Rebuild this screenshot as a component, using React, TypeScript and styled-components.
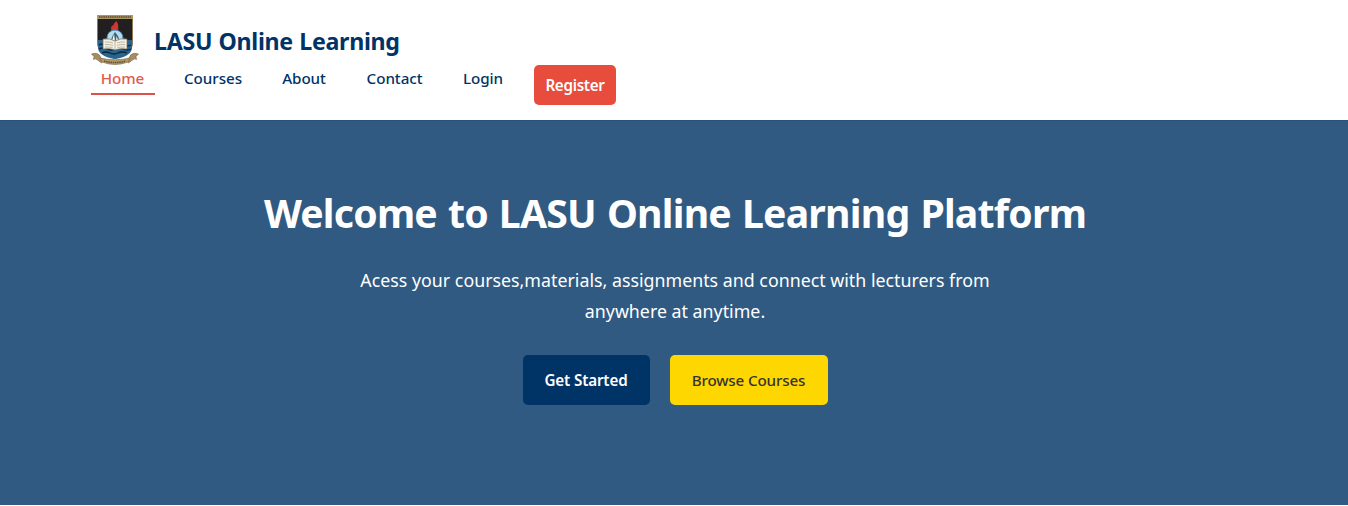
import React from "react";
import styled, { createGlobalStyle } from "styled-components";

const GlobalStyle = createGlobalStyle`
  * { box-sizing: border-box; margin: 0; padding: 0; }
  body {
    font-family: "Segoe UI", "Noto Sans", "Open Sans", sans-serif;
    background: #fff;
    color: #333;
    overflow: hidden;
  }
`;

const Header = styled.header`
  height: 120px;
  padding: 15px 0 0 91px;
  background: #fff;
`;

const Brand = styled.div`
  display: flex;
  align-items: center;
  gap: 15px;
  height: 50px;
`;

const BrandName = styled.span`
  margin-top: 1px;
  font-size: 23.2px;
  line-height: 36px;
  font-weight: 700;
  letter-spacing: -0.29px;
  word-spacing: 0.6px;
  color: #003366;
  white-space: nowrap;
`;

const Nav = styled.nav`
  display: flex;
  align-items: flex-start;
  gap: 20px;
`;

const NavLink = styled.a<{ $width: number; $active?: boolean }>`
  width: ${(p) => p.$width}px;
  height: 30px;
  padding-right: 1px;
  border-bottom: 2px solid ${(p) => (p.$active ? "#d9534a" : "transparent")};
  font-size: 15.2px;
  line-height: 27px;
  font-weight: 500;
  letter-spacing: -0.05px;
  text-align: center;
  white-space: nowrap;
  text-decoration: none;
  color: ${(p) => (p.$active ? "#e05a4e" : "#003366")};
`;

const RegisterLink = styled.a`
  width: 82px;
  height: 40px;
  border-radius: 5px;
  background: #e74c3c;
  color: #fff;
  font-size: 15.2px;
  line-height: 41px;
  font-weight: 600;
  letter-spacing: -0.3px;
  text-align: center;
  text-decoration: none;
`;

const Hero = styled.section`
  display: flex;
  flex-direction: column;
  align-items: center;
  height: 385px;
  padding-top: 62px;
  padding-left: 2px;
  background: #305a82;
  box-shadow: inset 0 1px 0 #2a517a;
  color: #fff;
  text-align: center;
`;

const Title = styled.h1`
  margin-top: -1px;
  font-size: 39.2px;
  line-height: 64px;
  font-weight: 700;
  letter-spacing: -0.77px;
  word-spacing: 1.5px;
  white-space: nowrap;
`;

const Lead = styled.p`
  margin-top: 20px;
  font-size: 17.8px;
  line-height: 31px;
  letter-spacing: 0.01px;
`;

const Line = styled.span`
  display: block;
  white-space: nowrap;
`;

const Actions = styled.div`
  display: flex;
  gap: 20px;
  margin-top: 28px;
`;

const Button = styled.a<{ $width: number; $tone: "navy" | "gold" }>`
  width: ${(p) => p.$width}px;
  height: 50px;
  border-radius: 5px;
  background: ${(p) => (p.$tone === "navy" ? "#003366" : "#ffd700")};
  color: ${(p) => (p.$tone === "navy" ? "#fff" : "#333")};
  font-size: 15.2px;
  line-height: 51px;
  font-weight: ${(p) => (p.$tone === "navy" ? 600 : 500)};
  letter-spacing: -0.14px;
  white-space: nowrap;
  text-decoration: none;
`;

const Crest = () => (
  <svg width="48" height="50" viewBox="0 0 48 50" aria-label="LASU crest">
    <path d="M6.500 .5h35v27c0 8-6 13-17.500 16C12.500 40.500 6.500 35.500 6.500 27.500z" fill="#211f20" stroke="#8d7a56" strokeWidth="1" />
    <path d="M7 25h34v7c0 6-5 10-17 12C12 42 7 38 7 32z" fill="#28648d" />
    <path d="M8 30q4-2 8 0t8 0 8 0 8 0M8 34q4-2 8 0t8 0 8 0 8 0M11 38q4-2 8 0t8 0 9 0" fill="none" stroke="#0d2537" strokeWidth="1.300" />
    <path d="M6 0h36v4H6z" fill="#ad9865" />
    <path d="M8 2h32" stroke="#5c4b31" strokeWidth="1.300" strokeDasharray="1.500 .7" />
    <path d="M20.500 16c-1-4 0-5 2-6 0-2 2-3 3.500-4 0 3 2 3 1 6 1 1 0 3-1 4z" fill="#d5332d" />
    <circle cx="24" cy="23" r="8" fill="#b8dcec" stroke="#448cb2" strokeWidth="1" />
    <path d="M19 27l3-7 2-3 3 4 2 6z" fill="#39637f" />
    <path d="M21 26l2-7 1 7zM25 26l.5-5 2 5z" fill="#f8f5e8" />
    <path d="M12 24q7-1 12 2 5-3 12-2v10q-7-1-12 1-5-2-12-1z" fill="#f4f0e2" stroke="#736b59" strokeWidth=".7" />
    <path d="M24 26v9M14 27q5-.4 8 1M14 29.500q5-.4 8 1M14 32q5-.4 8 1M26 28q3-1.400 8-1M26 30.500q3-1.400 8-1M26 33q3-1.400 8-1" fill="none" stroke="#99907d" strokeWidth=".6" />
    <path d="M.5 39q5-2 8 1 1 4 4 5l-2 3-4-3q-2-2-4-.5l.5-3zM47.500 39q-5-2-8 1-1 4-4 5l2 3 4-3q2-2 4-.5l-.5-3z" fill="#a88d5d" stroke="#756345" strokeWidth=".6" />
    <path d="M9 43q15 3.500 30 0l-2 4q-13 5-26 0z" fill="#b59a68" stroke="#756345" strokeWidth=".6" />
    <path d="M13 46q11 3 22 0" fill="none" stroke="#5d5038" strokeWidth="1.500" strokeDasharray="1.500 .7" />
  </svg>
);

const links = [
  { label: "Home", width: 64 },
  { label: "Courses", width: 77 },
  { label: "About", width: 65 },
  { label: "Contact", width: 76 },
  { label: "Login", width: 61 },
];

export default function App() {
  return (
    <>
      <GlobalStyle />
      <Header>
        <Brand>
          <Crest />
          <BrandName>LASU Online Learning</BrandName>
        </Brand>
        <Nav>
          {links.map((l, i) => (
            <NavLink key={l.label} href="#" $width={l.width} $active={i === 0}>
              {l.label}
            </NavLink>
          ))}
          <RegisterLink href="#">Register</RegisterLink>
        </Nav>
      </Header>
      <Hero>
        <Title>Welcome to LASU Online Learning Platform</Title>
        <Lead>
          <Line>Acess your courses,materials, assignments and connect with lecturers from</Line>
          <Line>anywhere at anytime.</Line>
        </Lead>
        <Actions>
          <Button href="#" $width={127} $tone="navy">Get Started</Button>
          <Button href="#" $width={158} $tone="gold">Browse Courses</Button>
        </Actions>
      </Hero>
    </>
  );
}
